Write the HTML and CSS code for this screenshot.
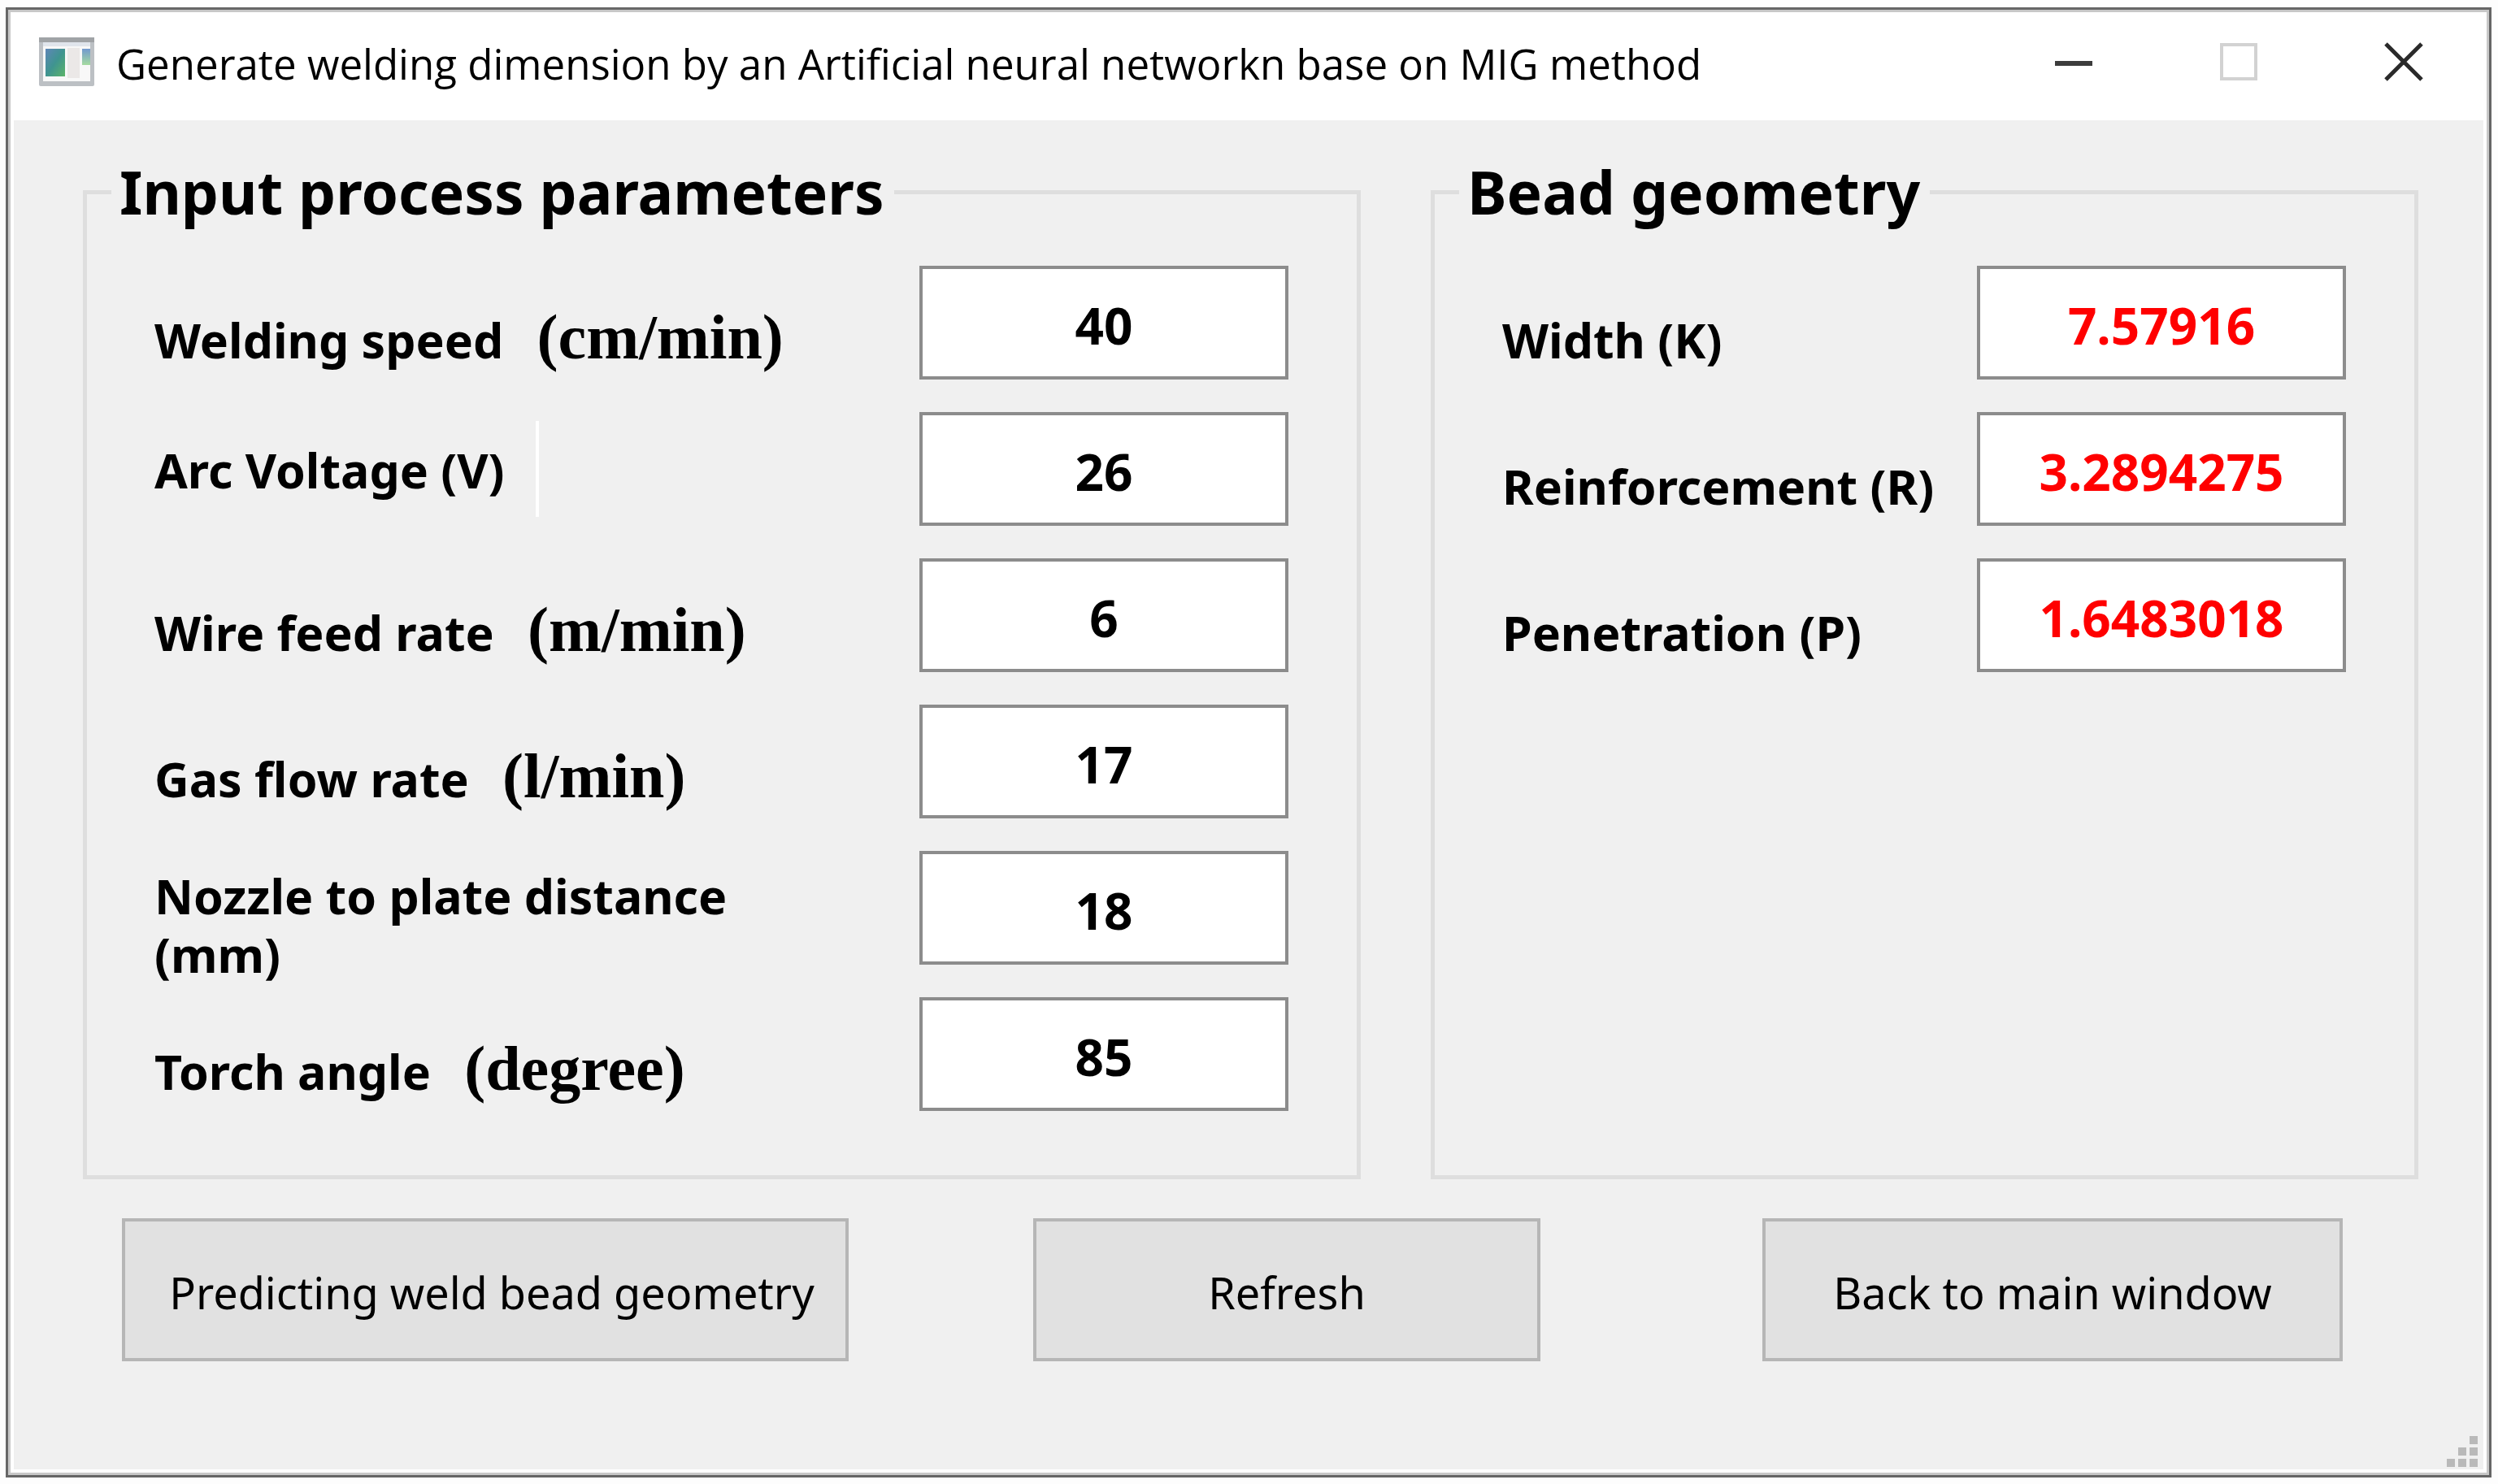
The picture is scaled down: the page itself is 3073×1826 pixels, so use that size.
FILE: index.html
```html
<!DOCTYPE html>
<html lang="en">
<head>
    <meta charset="UTF-8">
    <meta name="viewport" content="width=device-width, initial-scale=1.0">
    <title>Generate welding dimension</title>
    <link rel="stylesheet" href="styles.css">
</head>
<body>

<div class="window">
    <header class="titlebar">
        <svg class="app-icon" viewBox="0 0 70 64" aria-hidden="true">
            <defs>
                <linearGradient id="pane" x1="0" y1="0" x2="1" y2="1">
                    <stop offset="0" stop-color="#5f86b8"/>
                    <stop offset="0.5" stop-color="#3f9490"/>
                    <stop offset="1" stop-color="#5cb468"/>
                </linearGradient>
                <linearGradient id="pane-small" x1="0" y1="0" x2="0" y2="1">
                    <stop offset="0" stop-color="#7299cf"/>
                    <stop offset="1" stop-color="#a5dba0"/>
                </linearGradient>
            </defs>
            <rect x="1" y="2" width="68" height="60" rx="2" fill="#bcc0c4"/>
            <rect x="1" y="2" width="68" height="6" fill="#a0a3a6"/>
            <rect x="6" y="8" width="58" height="6" fill="#e0e5ec"/>
            <rect x="6" y="13" width="58" height="43" fill="#f8f8f8"/>
            <rect x="9" y="16" width="24" height="34" fill="url(#pane)"/>
            <rect x="36" y="15" width="15" height="37" fill="#ebe8e7"/>
            <rect x="54" y="16" width="10" height="20" fill="url(#pane-small)"/>
        </svg>
        <h1 class="title">Generate welding dimension by an Artificial neural networkn base on MIG method</h1>
        <div class="window-controls">
            <button class="control" type="button" aria-label="Minimize">
                <svg viewBox="0 0 48 48"><rect x="1" y="23" width="46" height="6" fill="#3c3c3c"/></svg>
            </button>
            <button class="control" type="button" aria-label="Maximize" disabled>
                <svg viewBox="0 0 48 48"><rect x="3" y="3" width="42" height="42" fill="none" stroke="#d2d2d2" stroke-width="4"/></svg>
            </button>
            <button class="control" type="button" aria-label="Close">
                <svg viewBox="0 0 48 48"><path d="M2 2L46 46M46 2L2 46" fill="none" stroke="#2a2a2a" stroke-width="5"/></svg>
            </button>
        </div>
    </header>

    <main class="content">
        <div class="groups">
            <fieldset class="group">
                <legend class="group-title">Input process parameters</legend>
                <div class="field">
                    <label class="field-label" for="speed">Welding speed <span class="unit">(cm/min)</span></label>
                    <input class="field-input" id="speed" type="text" value="40">
                </div>
                <div class="field">
                    <label class="field-label marked" for="voltage">Arc Voltage (V)</label>
                    <input class="field-input" id="voltage" type="text" value="26">
                </div>
                <div class="field">
                    <label class="field-label" for="feed">Wire feed rate <span class="unit">(m/min)</span></label>
                    <input class="field-input" id="feed" type="text" value="6">
                </div>
                <div class="field">
                    <label class="field-label" for="gas">Gas flow rate <span class="unit">(l/min)</span></label>
                    <input class="field-input" id="gas" type="text" value="17">
                </div>
                <div class="field">
                    <label class="field-label" for="nozzle">Nozzle to plate distance<br>(mm)</label>
                    <input class="field-input" id="nozzle" type="text" value="18">
                </div>
                <div class="field">
                    <label class="field-label" for="angle">Torch angle <span class="unit">(degree)</span></label>
                    <input class="field-input" id="angle" type="text" value="85">
                </div>
            </fieldset>

            <fieldset class="group">
                <legend class="group-title">Bead geometry</legend>
                <div class="field">
                    <label class="field-label" for="width">Width (K)</label>
                    <input class="field-input result" id="width" type="text" value="7.57916" readonly>
                </div>
                <div class="field">
                    <label class="field-label" for="reinforcement">Reinforcement (R)</label>
                    <input class="field-input result" id="reinforcement" type="text" value="3.2894275" readonly>
                </div>
                <div class="field">
                    <label class="field-label" for="penetration">Penetration (P)</label>
                    <input class="field-input result" id="penetration" type="text" value="1.6483018" readonly>
                </div>
            </fieldset>
        </div>

        <div class="actions">
            <button class="button predict" type="button">Predicting weld bead geometry</button>
            <button class="button refresh" type="button">Refresh</button>
            <button class="button back" type="button">Back to main window</button>
        </div>

        <footer class="statusbar">
            <svg class="grip" viewBox="0 0 38 38" fill="#b9b9b9" aria-hidden="true">
                <rect x="28" y="0" width="10" height="10"/>
                <rect x="14" y="14" width="10" height="10"/>
                <rect x="28" y="14" width="10" height="10"/>
                <rect x="0" y="28" width="10" height="10"/>
                <rect x="14" y="28" width="10" height="10"/>
                <rect x="28" y="28" width="10" height="10"/>
            </svg>
        </footer>
    </main>
</div>

</body>
</html>
```
FILE: styles.css
```css
* {
    box-sizing: border-box;
}

body {
    margin: 0;
    padding: 9px 8px 8px 7px;
    min-height: 100vh;
    display: flex;
    background-color: #fdfdfd;
    color: #000;
    font-family: "Noto Sans", sans-serif;
}

.window {
    flex: 1;
    display: flex;
    flex-direction: column;
    padding: 7px;
    background-color: #fff;
    border: 3px solid #666;
    box-shadow: inset 0 0 0 3px #c8c8c8;
}

.titlebar {
    display: flex;
    align-items: center;
    height: 129px;
    padding: 0 0 16px 30px;
}

.app-icon {
    width: 70px;
    height: 64px;
}

.title {
    margin: 4px 0 0 26px;
    font-family: "Open Sans", sans-serif;
    font-size: 51px;
    font-weight: 400;
    white-space: nowrap;
}

.window-controls {
    display: flex;
    margin: 0 -3px 0 auto;
}

.control {
    width: 203px;
    padding: 0;
    border: none;
    background: none;
}

.control svg {
    display: block;
    width: 48px;
    height: 48px;
    margin: 0 auto;
}

.content {
    flex: 1;
    display: flex;
    flex-direction: column;
    background-color: #f0f0f0;
}

.groups {
    display: grid;
    grid-template-columns: 1572fr 1215fr;
    gap: 86px;
    padding: 38px 80px 0 85px;
}

.group {
    min-width: 0;
    margin: 0;
    padding: 40px 84px 78px 30px;
    border: 5px solid #dedede;
}

.group-title {
    padding: 0 12px 0 10px;
    font-size: 73px;
    font-weight: 700;
    line-height: 100px;
    white-space: nowrap;
}

.field {
    display: flex;
    align-items: center;
    justify-content: space-between;
    height: 142px;
    margin-bottom: 38px;
    padding-left: 53px;
}

.field:last-child {
    margin-bottom: 0;
}

.field-label {
    padding-top: 42px;
    font-size: 59px;
    font-weight: 700;
    line-height: 72px;
    white-space: nowrap;
}

.field-label.marked {
    padding: 24px 38px 22px 0;
    border-right: 4px solid #fff;
}

.unit {
    margin-left: 26px;
    font-family: "Liberation Serif", serif;
    font-size: 78px;
    line-height: 1px;
}

.field-input {
    width: 454px;
    height: 140px;
    padding: 6px 0 0;
    border: 4px solid #8c8c8c;
    border-radius: 0;
    background-color: #fff;
    color: #000;
    font-family: "Noto Sans", sans-serif;
    font-size: 62px;
    font-weight: 700;
    text-align: center;
}

.field-input.result {
    color: #f00;
}

.actions {
    display: flex;
    padding: 48px 173px 0 133px;
}

.button {
    height: 176px;
    padding: 6px 8px 0;
    border: 4px solid #b6b6b6;
    border-radius: 0;
    background-color: #e1e1e1;
    color: #000;
    font-family: "Noto Sans", sans-serif;
    font-size: 54px;
    white-space: nowrap;
}

.predict {
    flex: 870 1 0;
    padding: 6px 0 0 16px;
}

.refresh {
    flex: 600 1 0;
    margin: 0 273px 0 227px;
}

.back {
    flex: 690 1 0;
}

.statusbar {
    display: flex;
    justify-content: flex-end;
    margin-top: auto;
    padding: 0 7px 3px;
}

.grip {
    width: 38px;
    height: 38px;
}
```
